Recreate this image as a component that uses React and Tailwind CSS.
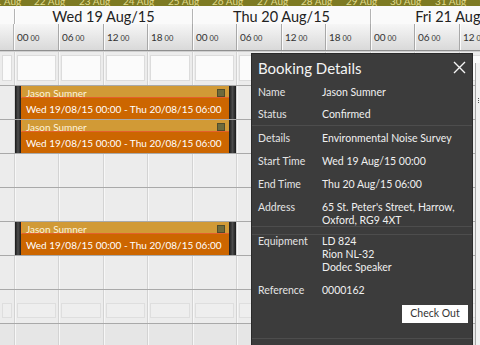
import React from "react";

const colW = ["w-[44px]", "w-[45px]"];
const cols = Array.from({ length: 11 }, (_, i) => i);
const hours = ["00", "06", "12", "18", "00", "06", "12", "18", "00", "06", "12"];
const dayLabels = ["Wed 19 Aug/15", "Thu 20 Aug/15", "Fri 21 Aug/15"];
const bandLabels = ["21 Aug", "22 Aug", "23 Aug", "24 Aug", "25 Aug", "26 Aug", "27 Aug", "28 Aug", "29 Aug", "30 Aug", "31 Aug", "1 Sep"];

function Event() {
  return (
    <div className="absolute left-[15px] top-0 w-[221px] h-[33px] flex">
      <div className="w-[6px] h-full bg-gradient-to-r from-[#181818] via-[#4e4e4e] to-[#1e1e1e]" />
      <div className="flex-1 flex flex-col min-w-0">
        <div className="h-[12px] shrink-0 flex bg-[#d19a36] border-b border-l border-b-[#e4602c] border-l-[#f08a24] pl-[4px] pr-[4px]">
          <span className="flex-1 text-[10px] leading-[10px] pt-[2px] text-[#fdf3dc] whitespace-nowrap">Jason Sumner</span>
          <span className="mt-[3px] w-[8px] h-[8px] bg-[#6d6a3c] border border-[#4f4c2c]" />
        </div>
        <div className="flex-1 bg-[#cc6600] flex items-center pl-[5px] pt-[1px] text-[10px] leading-[12px] text-white whitespace-nowrap">
          Wed 19/08/15 00:00 - Thu 20/08/15 06:00
        </div>
      </div>
      <div className="w-[7px] h-full bg-gradient-to-r from-[#1c1c1c] via-[#4c4c4c] to-[#1a1a1a]" />
    </div>
  );
}

function Cell({ variant, first, w }) {
  return (
    <div className={`${first ? "w-[14px]" : w + " border-l border-[#d3d3d3] shadow-[inset_1px_0_0_#f7f7f7]"} shrink-0 h-full`}>
      {variant === "white" && (
        <div className="mx-[2px] mt-[3px] h-[26px] bg-[#fbfbfb] border border-[#dcdcdc]" />
      )}
      {variant === "faint" && (
        <div className="mx-[2px] mt-[13px] h-[15px] bg-[#eeeeee] border border-[#dedede]" />
      )}
    </div>
  );
}

function Row({ variant, event, last }) {
  return (
    <div className={`relative flex shrink-0 h-[34px] ${last ? "bg-[#e6e6e6]" : "border-b border-[#a9a9a9]"}`}>
      <Cell first variant={variant} />
      {cols.map((i) => (
        <Cell key={i} w={colW[i % 2]} variant={variant} />
      ))}
      {event && <Event />}
    </div>
  );
}

function Label({ children }) {
  return <div className="w-[64px] shrink-0 text-[#e4e4e4]">{children}</div>;
}

export default function App() {
  return (
    <div className="w-[480px] h-[345px] overflow-hidden relative bg-[#ececec] font-['Lato',sans-serif]">
      {/* date band */}
      <div className="h-[6px] bg-[#7d7a23] overflow-hidden flex -ml-[10px]">
        {bandLabels.map((l, i) => (
          <div key={l} className={`${colW[i % 2]} shrink-0 -mt-[4px] text-[10px] leading-[10px] text-[#e0da8c] whitespace-nowrap`}>
            {l}
          </div>
        ))}
      </div>
      {/* day row */}
      <div className="bg-[#fafafa] pt-[3px]">
        <div className="flex h-[15px]">
          <div className="w-[14px] shrink-0" />
          {dayLabels.map((d) => (
            <div key={d} className="w-[178px] shrink-0 border-l border-[#b4b4b4] shadow-[inset_1px_0_0_#ffffff] text-center text-[14.5px] leading-[15px] text-[#222] whitespace-nowrap">
              {d}
            </div>
          ))}
        </div>
      </div>
      {/* hour row */}
      <div className="flex h-[26px] bg-gradient-to-b from-[#f6f6f6] to-[#d9d9d9]">
        <div className="w-[14px] shrink-0 border-r border-[#b4b4b4]" />
        {cols.map((i) => (
          <div key={i} className={`${colW[i % 2]} shrink-0 ${i === 0 ? "" : "border-l border-[#a8a8a8]"} shadow-[inset_1px_0_0_#fbfbfb] flex items-baseline pl-[3px] pt-[8px] text-[#333] leading-[10px]`}>
            <span className="text-[10px]">{hours[i]}</span>
            <span className="text-[7.5px] ml-[2px]">00</span>
          </div>
        ))}
      </div>
      <div className="h-px bg-[#8f8f8f]" />
      <div className="h-px bg-[#cfcfcf]" />
      {/* body */}
      <div className="flex flex-col">
        <Row variant="white" />
        <Row event />
        <Row event />
        <Row />
        <Row />
        <Row event />
        <Row />
        <Row variant="faint" />
        <Row last />
      </div>

      {/* right side element behind panel */}
      <div className="absolute left-[475px] top-[63px] w-[20px] h-[290px] bg-[#f2f2f2] border-l border-[#a8a8a8]">
        <div className="ml-[2px] mt-[35px] flex flex-col gap-[1px]">
          <div className="w-px h-px bg-[#555]" />
          <div className="w-px h-px bg-[#555]" />
          <div className="w-px h-px bg-[#555]" />
        </div>
      </div>

      {/* booking details panel */}
      <div className="absolute left-[251px] top-[53px] w-[222px] h-[300px] bg-[#3c3c3c] border border-[#2a2a2a] text-[10.5px] text-[#f0f0f0]">
        <div className="h-[27px] flex items-center justify-between pl-[6px] pr-[6px]">
          <span className="text-[15px] leading-[18px] text-[#f4f4f4]">Booking Details</span>
          <svg width="13" height="13" viewBox="0 0 13 13">
            <path d="M1 1L12 12M12 1L1 12" stroke="#f5f5f5" strokeWidth="1.4" />
          </svg>
        </div>
        <div className="px-[6px]">
          <div className="h-[23px] flex items-center leading-[13px]"><Label>Name</Label><div>Jason Sumner</div></div>
          <div className="h-[21px] flex items-center leading-[13px]"><Label>Status</Label><div>Confirmed</div></div>
        </div>
        <div className="border-y border-[#4d4d4d] pt-[1px] px-[6px]">
          <div className="h-[23px] flex items-center leading-[13px]"><Label>Details</Label><div>Environmental Noise Survey</div></div>
          <div className="h-[23px] flex items-center leading-[13px]"><Label>Start Time</Label><div>Wed 19 Aug/15 00:00</div></div>
          <div className="h-[23px] flex items-center leading-[13px]"><Label>End Time</Label><div>Thu 20 Aug/15 06:00</div></div>
          <div className="flex pt-[5px] leading-[12.5px]">
            <Label>Address</Label>
            <div>65 St. Peter's Street, Harrow,<br />Oxford, RG9 4XT</div>
          </div>
        </div>
        <div className="mt-[7px] border-t border-[#4d4d4d] px-[6px]">
          <div className="flex leading-[13px]">
            <Label>Equipment</Label>
            <div>LD 824<br />Rion NL-32<br />Dodec Speaker</div>
          </div>
          <div className="mt-[5px] h-[23px] flex items-center leading-[13px]"><Label>Reference</Label><div>0000162</div></div>
        </div>
        <div className="mt-[3px] flex justify-end pr-[4px]">
          <div className="w-[66px] h-[18px] bg-white flex items-center justify-center text-[#333] text-[10.5px]">Check Out</div>
        </div>
        <div className="mt-[15px] border-t border-[#4d4d4d]" />
      </div>
    </div>
  );
}
